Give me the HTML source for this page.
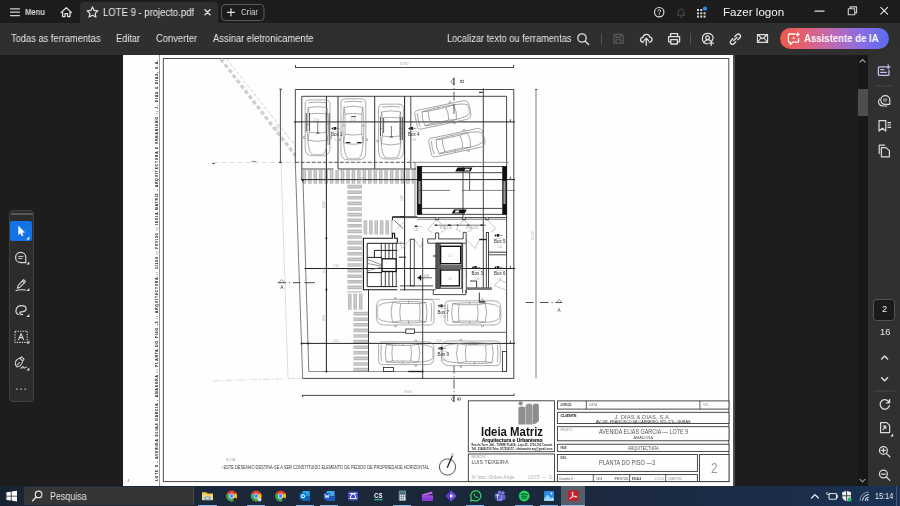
<!DOCTYPE html>
<html lang="pt"><head><meta charset="utf-8"><title>LOTE 9 - projecto.pdf</title>
<style>
*{margin:0;padding:0;box-sizing:border-box}
html,body{width:900px;height:506px;overflow:hidden;background:#1e1e1e;font-family:"Liberation Sans",sans-serif;color:#e6e6e6}
#app{position:relative;width:900px;height:506px;overflow:hidden;opacity:.999}
.abs{position:absolute}
.t{position:absolute;white-space:nowrap;line-height:1;display:inline-block;transform-origin:0 50%;will-change:transform}
#titlebar{left:0;top:0;width:900px;height:23px;background:#1d1d1d}
#tab{left:80px;top:2px;width:138px;height:22px;background:#303030;border-radius:4px 4px 0 0}
#toolbar{left:0;top:23px;width:900px;height:32px;background:#303030}
#aibtn{left:780px;top:28px;width:109px;height:21px;border-radius:10.5px;background:linear-gradient(90deg,#ee5a4a 0%,#e8606a 18%,#c46ab0 45%,#8a6ee6 75%,#5c6cf0 100%)}

#docbg{left:0;top:55px;width:868px;height:431px;background:#1e1e1e}
#page{left:123px;top:55px;width:610px;height:431px;background:#fff}
#pageshadow{left:733px;top:55px;width:1.5px;height:431px;background:#4e4e4e}
#scroll{left:857.5px;top:55px;width:10.5px;height:431px;background:#181818}
#thumb{left:858px;top:89px;width:9.5px;height:26.5px;background:#4f4f4f}
#rpanel{left:868px;top:55px;width:32px;height:431px;background:#313131}
#ltools{left:8.5px;top:210px;width:25.5px;height:192px;background:#2d2d2d;border:1px solid #414141;border-radius:4px}
#lgrip{left:10.5px;top:213px;width:22px;height:2px;background:#585858;border-radius:1px}
#lsel{left:10.4px;top:221px;width:21.6px;height:20.4px;background:#1473e6;border-radius:2px}
#taskbar{left:0;top:486px;width:900px;height:20px;background:linear-gradient(90deg,#182232 0%,#1c293b 4%,#1c293b 55%,#1c2d49 85%,#1c3356 100%)}
#tsearch{left:23.8px;top:486.6px;width:170px;height:18.2px;background:#363636;border-right:1px solid #4c4c4c}
#tactive{left:561px;top:486px;width:24px;height:20px;background:#55606c}
.ul{top:504.6px;height:1.4px;background:#86b6e8}
</style></head>
<body><div id="app">
<div id="titlebar" class="abs"></div><div id="tab" class="abs"></div><div id="toolbar" class="abs"></div>
<svg class="abs" style="left:0;top:0" width="900" height="55" viewBox="0 0 900 55" fill="none" stroke="#e0e0e0" stroke-width="1.3" stroke-linecap="round" stroke-linejoin="round">
<g stroke="#d0d0d0" stroke-width="1.2"><path d="M10.5 8.8H19.5M10.5 12.2H19.5M10.5 15.6H19.5"/></g>
<path d="M61 12.6L66.3 7.7L71.6 12.6M62.6 11.6V16.6H65V13.6H67.6V16.6H70V11.6" stroke-width="1.25"/>
<path d="M92.5 6.9L94.1 10.4L97.9 10.8L95.1 13.4L95.9 17.1L92.5 15.2L89.1 17.1L89.9 13.4L87.1 10.8L90.9 10.4Z" stroke-width="1.2"/>
<path d="M205 9.8L210 14.8M210 9.8L205 14.8" stroke-width="1.4"/>
<rect x="221.5" y="4.5" width="42.5" height="16" rx="3.5" stroke="#5a5a5a" stroke-width="1"/>
<path d="M227.5 12.3H234.5M231 8.8V15.8" stroke-width="1.2"/>
<circle cx="659.2" cy="12.2" r="4.7" stroke-width="1.2"/>
<path d="M657.9 10.9C657.9 9.3 660.6 9.3 660.6 10.9C660.6 11.9 659.3 12 659.3 13.1M659.3 14.6V14.7" stroke-width="1"/>
<path d="M677.3 15.2C678.6 14 678.2 12.2 678.6 10.6C679.2 8.4 682.8 8.4 683.4 10.6C683.8 12.2 683.4 14 684.7 15.2ZM680 16.6C680.4 17.6 681.6 17.6 682 16.6" stroke="#484848" stroke-width="1.1"/>
<g fill="#d8d8d8" stroke="none"><rect x="697" y="9" width="2" height="2"/><rect x="700.3" y="9" width="2" height="2"/>
<rect x="697" y="12.3" width="2" height="2"/><rect x="700.3" y="12.3" width="2" height="2"/><rect x="703.6" y="12.3" width="2" height="2"/>
<rect x="697" y="15.6" width="2" height="2"/><rect x="700.3" y="15.6" width="2" height="2"/><rect x="703.6" y="15.6" width="2" height="2"/>
<circle cx="705" cy="8.6" r="2.1" fill="#2f8cf0"/></g>
<path d="M815 11.2H824" stroke-width="1.2"/>
<path d="M848.3 8.7H854.7V14.7H848.3ZM850.2 8.5V6.9H856.6V12.9H855" stroke="#cfcfcf" stroke-width="1.1"/>
<path d="M880.8 7.4L887.6 14.2M887.6 7.4L880.8 14.2" stroke-width="1.2"/>
<!-- toolbar icons -->
<circle cx="582" cy="38" r="4.2" stroke-width="1.3"/><path d="M585.2 41.2L588.6 44.6" stroke-width="1.4"/>
<path d="M601.5 33.5V44M690.5 33.5V44" stroke="#555" stroke-width="1"/>
<path d="M613.8 34.2H621.4L623.4 36.2V43.2H613.8ZM616 34.4V37.4H620.6V34.4M616 43V39.8H621.2V43" stroke="#5c5c5c" stroke-width="1.1"/>
<path d="M643.6 42.2C639.6 42.2 639.6 37.6 643 37.4C643.4 33.2 649.6 33.4 649.8 37.2C652.8 37.4 652.8 42 649.2 42.2M646.3 45.2V38.6M644 40.6L646.3 38.3L648.6 40.6" stroke-width="1.3"/>
<path d="M670.6 36.4V33.6H677.6V36.4M670.6 41.8H668.6V36.6H679.6V41.8H677.6M670.8 39.6H677.4V44H670.8Z" stroke-width="1.3"/>
<path d="M711.6 41.4C715.2 36.6 711.4 33.2 707.4 33.4C700.6 33.8 700.8 43.6 707.6 43.8M704.4 42.4C704.8 39.4 710.2 39.4 710.6 41M707.5 35.8A1.9 1.9 0 1 0 707.51 35.8M711.2 41V45.4M709 43.2H713.4" stroke-width="1.2"/>
<path d="M733.8 40.6L736.8 37.6M734.8 36.6L736.4 35C739 32.6 742 35.6 739.6 38L738 39.6M735.8 41.8L734.2 43.4C731.8 45.8 728.8 42.8 731.2 40.4L732.8 38.8" stroke-width="1.4"/>
<path d="M757.4 34.6H767.6V42.4H757.4ZM757.6 34.8L762.5 38.8L767.4 34.8M757.6 42.2L761 38M767.4 42.2L764 38" stroke-width="1.1"/>
</svg>
<span id="t_menu" class="t" style="left:25px;top:7.78px;font-size:8.5px;color:#d6d6d6;font-weight:bold;transform:scaleX(0.9008);">Menu</span>
<span id="t_tab" class="t" style="left:102.9px;top:7.70px;font-size:10px;color:#f2f2f2;font-weight:normal;transform:scaleX(0.9528);">LOTE 9 - projecto.pdf</span>
<span id="t_criar" class="t" style="left:241px;top:7.65px;font-size:9px;color:#dcdcdc;font-weight:normal;transform:scaleX(0.8718);">Criar</span>
<span id="t_todas" class="t" style="left:10.5px;top:33.80px;font-size:10px;color:#e8e8e8;font-weight:normal;transform:scaleX(0.9306);">Todas as ferramentas</span>
<span id="t_edit" class="t" style="left:116px;top:33.80px;font-size:10px;color:#e8e8e8;font-weight:normal;transform:scaleX(0.9187);">Editar</span>
<span id="t_conv" class="t" style="left:156.3px;top:33.80px;font-size:10px;color:#e8e8e8;font-weight:normal;transform:scaleX(0.9384);">Converter</span>
<span id="t_ass" class="t" style="left:213.3px;top:33.80px;font-size:10px;color:#e8e8e8;font-weight:normal;transform:scaleX(0.9359);">Assinar eletronicamente</span>
<span id="t_loc" class="t" style="left:447px;top:33.80px;font-size:10px;color:#e8e8e8;font-weight:normal;transform:scaleX(0.9255);">Localizar texto ou ferramentas</span>
<span id="t_logon" class="t" style="left:722.8px;top:6.55px;font-size:11px;color:#f4f4f4;font-weight:normal;transform:scaleX(1.0535);">Fazer logon</span>
<div id="aibtn" class="abs"></div>
<svg class="abs" style="left:786px;top:31px" width="16" height="16" viewBox="0 0 16 16" fill="none" stroke="#fff" stroke-width="1.3" stroke-linejoin="round" stroke-linecap="round">
<path d="M8.6 3H3.4Q2.4 3 2.4 4V10.2Q2.4 11.2 3.4 11.2H4.2V13.6L6.8 11.2H11.6Q12.6 11.2 12.6 10.2V7.6"/>
<path d="M11.6 1L12.2 2.8L14 3.4L12.2 4L11.6 5.8L11 4L9.2 3.4L11 2.8Z" fill="#fff" stroke-width=".5"/><circle cx="7.6" cy="7.2" r=".9" fill="#fff" stroke="none"/></svg>
<span id="t_ai" class="t" style="left:804.3px;top:33.80px;font-size:10px;color:#ffffff;font-weight:bold;transform:scaleX(0.9600);">Assistente de IA</span>
<div id="docbg" class="abs"></div><div id="page" class="abs"></div><div id="pageshadow" class="abs"></div>
<div id="scroll" class="abs"></div><div id="thumb" class="abs"></div><div id="rpanel" class="abs"></div>
<div id="ltools" class="abs"></div><div id="lgrip" class="abs"></div><div id="lsel" class="abs"></div>
<svg class="abs" style="left:0;top:205px" width="40" height="200" viewBox="0 205 40 200" fill="none" stroke="#dcdcdc" stroke-width="1.15" stroke-linecap="round" stroke-linejoin="round">
<path d="M18.5 226.2V234.8L20.5 232.9L22 236L23.2 235.5L21.8 232.5L24.4 232.3Z" fill="#fff" stroke="#fff" stroke-width=".4"/>
<g fill="#e8e8e8" stroke="none"><path d="M29.3 236.6V239.6H26.3Z" fill="#fff"/><path d="M29.3 261.6V264.6H26.3Z"/><path d="M29.3 288V291H26.3Z"/><path d="M29.3 314V317H26.3Z"/><path d="M29.3 340.6V343.6H26.3Z"/><path d="M29.3 367.6V370.6H26.3Z"/></g>
<path d="M20.6 252.4C17.6 252.4 15.6 254.6 15.6 257.4C15.6 260.4 18 262.6 21 262.6H25.8V257.4C25.8 254.6 23.6 252.4 20.6 252.4Z"/><path d="M18.6 256.4H23M18.6 258.4H22" stroke-width=".9"/>
<path d="M17.4 288.2L18.2 285.4L23.6 279.6L25.6 281.6L20 287.2ZM22.4 280.8L24.4 282.8M16 290.6C18.6 289.6 20.6 289.4 25.6 290" stroke-width="1.05"/>
<path d="M18.4 314.6C14.2 312.6 15.6 305.6 21.6 305.6C27.2 305.6 27.6 310.6 23 311.6C20.6 312.2 19.4 311.6 19.8 313.2C20 314.4 21.4 314.8 22.6 314.4"/>
<path d="M15 331.2H27.2V342.4H15Z" stroke-dasharray="1.3 1.2" stroke-linecap="butt" stroke-width="1.1"/><path d="M18.6 339.6L21.1 333.6L23.6 339.6M19.6 337.6H22.6" stroke-width="1.1"/>
<path d="M15.4 364.6C14.6 361.8 16.6 359 19.8 358.2L22.6 360.8C22.2 364.2 19.8 366.6 17 367ZM20 358L21.6 356.8L24 359.2L22.8 360.8M17.2 365L19.6 362.6M21 368.4C22.6 366.4 23.6 366.4 23.6 367.6C23.6 368.8 25.4 367.6 26.4 367" stroke-width="1.05"/>
<g fill="#9a9a9a" stroke="none"><circle cx="16.8" cy="389.2" r=".9"/><circle cx="21" cy="389.2" r=".9"/><circle cx="25.2" cy="389.2" r=".9"/></g>
</svg>
<svg class="abs" style="left:855px;top:55px" width="45" height="431" viewBox="855 55 45 431" fill="none" stroke="#dcdcdc" stroke-width="1.2" stroke-linecap="round" stroke-linejoin="round">
<path d="M860 62L862.5 59.5L865 62" stroke="#9a9a9a" stroke-width="1.2"/><path d="M860 479.4L862.5 481.9L865 479.4" stroke="#9a9a9a" stroke-width="1.2"/>
<g stroke="#c4c2f4"><path d="M885.4 66.8H879.4Q878.4 66.8 878.4 67.8V74.4Q878.4 75.4 879.4 75.4H888Q889 75.4 889 74.4V70.6" stroke-width="1.3"/><path d="M880.6 69.6H884M880.6 72.4H886.4" stroke-width="1.1"/><path d="M888.2 64.6L888.8 66.4L890.6 67L888.8 67.6L888.2 69.4L887.6 67.6L885.8 67L887.6 66.4Z" fill="#c4c2f4" stroke-width=".5"/></g>
<path d="M876 86H892" stroke="#4a4a4a" stroke-width="1"/>
<path d="M885.4 95.6C882.6 95.6 880.8 97.6 880.8 100C880.8 102.6 882.8 104.4 885.4 104.4H889.8V100C889.8 97.6 888 95.6 885.4 95.6ZM879.6 99C877.4 101.6 878.6 105.4 882.4 106H886.8" stroke-width="1.15"/><path d="M883.6 99.2H887M883.6 101H886.4" stroke-width=".8"/>
<path d="M879 120.6H885.8V131L882.4 128.2L879 131ZM888 122.6H890.6M888 125H890.6M888 127.4H890.6" stroke-width="1.2"/>
<path d="M881.4 147.6H886L889.4 150.6V156.8H881.4ZM879.2 153.6V145.2H884.6" stroke-width="1.2"/>
<rect x="873.5" y="299.5" width="21" height="21" rx="3" fill="#1b1b1b" stroke="#555" stroke-width="1"/>
<path d="M881.6 359L884.6 356L887.6 359M881.6 377.8L884.6 380.8L887.6 377.8" stroke-width="1.5"/>
<path d="M874 391H895" stroke="#4a4a4a" stroke-width="1"/>
<path d="M889.2 402.6A4.7 4.7 0 1 0 889.4 405.6M889.6 399.6V402.8H886.4" stroke-width="1.3"/>
<path d="M880.6 422.6H886.8L889.6 425.4V432.6H880.6ZM883 429.6L885.6 426.4M885.8 428.6V426.2H883.4" stroke-width="1.2"/><path d="M893.2 433.6V436.6H890.2Z" fill="#e8e8e8" stroke="none"/>
<circle cx="883.4" cy="450.4" r="3.9" stroke-width="1.25"/><path d="M886.4 453.4L889.8 456.8M881.6 450.4H885.2M883.4 448.6V452.2" stroke-width="1.25"/>
<circle cx="883.4" cy="474" r="3.9" stroke-width="1.25"/><path d="M886.4 477L889.8 480.4M881.6 474H885.2" stroke-width="1.25"/>
</svg>
<span id="t_pg" class="t" style="left:881.6px;top:304.78px;font-size:9.2px;color:#f0f0f0;font-weight:normal;transform:scaleX(0.9756);">2</span>
<span id="t_pgs" class="t" style="left:879.8px;top:327.58px;font-size:9.2px;color:#e6e6e6;font-weight:normal;transform:scaleX(1.0162);">16</span>
<svg class="abs" style="left:0;top:0" width="900" height="506" viewBox="0 0 900 506" fill="none" font-family="'Liberation Sans',sans-serif">
<g>
<path d="M159.5 55.0L159.5 486.0" stroke="#808080" stroke-width="0.79" />
<rect x="163.3" y="58.5" width="565.5" height="423.1" stroke="#484848" stroke-width="0.97" fill="none" />
<text transform="translate(157.6 481) rotate(-90)" font-size="3.1" font-weight="bold" fill="#1c1c1c" stroke="#1c1c1c" stroke-width=".08" textLength="421" lengthAdjust="spacing">LOTE 9 - AVENIDA ELIAS GARCIA - AMADORA :: PLANTA DO PISO -3 :: ARQUITECTURA :: 1/100 :: FEV/20 :: IDEIA MATRIZ - ARQUITECTURA E URBANISMO :: J. DIAS &amp; DIAS, S.A.</text>
<text x="127.5" y="481.6" font-size="3" fill="#777" text-anchor="start" font-weight="normal" font-style="italic">4</text>
<path d="M220.8 59.0L295.5 155.7" stroke="#d0d0d0" stroke-width="3.34" stroke-dasharray="4.2 2.4"/>
<path d="M226.6 59.0L296.0 146.5" stroke="#bdbdbd" stroke-width="0.70" stroke-dasharray="3.5 2"/>
<path d="M213.0 162.6L295.0 162.6" stroke="#d2d2d2" stroke-width="0.70" stroke-dasharray="6 2"/>
<path d="M212.0 163.6L215.0 163.6" stroke="#444" stroke-width="0.88" />
<path d="M251.5 161.4L256.5 161.4" stroke="#999" stroke-width="1.06" />
<path d="M281.0 163.0L288.0 378.4" stroke="#d2d2d2" stroke-width="0.70" />
<path d="M213.0 381.0L302.0 378.2" stroke="#cfcfcf" stroke-width="0.70" stroke-dasharray="7 2 1.5 2"/>
<path d="M295.3 67.5L513.8 67.5" stroke="#333" stroke-width="0.88" />
<path d="M295.5 65.0L295.5 68.0" stroke="#333" stroke-width="0.88" />
<path d="M513.6 65.0L513.6 68.0" stroke="#333" stroke-width="0.88" />
<text x="404.0" y="64.6" font-size="3.6" fill="#aaa" text-anchor="middle" font-weight="normal" >19.80</text>
<path d="M536.0 89.3L536.0 378.4" stroke="#7c7c7c" stroke-width="0.97" />
<path d="M535.0 89.6L537.4 89.6" stroke="#444" stroke-width="0.88" />
<text x="0.0" y="0.0" font-size="3.6" fill="#b0b0b0" text-anchor="middle" font-weight="normal" transform="translate(534 236) rotate(-90)">29.00</text>
<path d="M280.4 88.9L280.4 162.4" stroke="#3c3c3c" stroke-width="0.88" />
<path d="M279.4 89.2L282.0 89.2" stroke="#333" stroke-width="0.88" />
<path d="M279.0 162.4L281.8 162.4" stroke="#333" stroke-width="1.06" />
<text x="0.0" y="0.0" font-size="3.6" fill="#b8b8b8" text-anchor="middle" font-weight="normal" transform="translate(278.6 128) rotate(-90)">7.40</text>
<path d="M302.2 395.4L514.2 395.4" stroke="#2c2c2c" stroke-width="0.88" />
<path d="M302.5 395.0L302.5 397.0" stroke="#333" stroke-width="0.88" />
<path d="M514.0 393.6L514.0 395.6" stroke="#333" stroke-width="0.88" />
<text x="408.0" y="393.0" font-size="3.6" fill="#aaa" text-anchor="middle" font-weight="normal" >19.80</text>
<path d="M302.6 170.0h3.6v13.8h-3.6zM308.1 170.0h3.6v13.8h-3.6zM313.5 170.0h3.6v13.8h-3.6zM318.9 170.0h3.6v13.8h-3.6zM324.4 170.0h3.6v13.8h-3.6zM329.8 170.0h3.6v13.8h-3.6zM335.3 170.0h3.6v13.8h-3.6zM340.7 170.0h3.6v13.8h-3.6zM346.2 170.0h3.6v13.8h-3.6zM351.6 170.0h3.6v13.8h-3.6zM357.1 170.0h3.6v13.8h-3.6zM362.5 170.0h3.6v13.8h-3.6zM368.0 170.0h3.6v13.8h-3.6zM373.4 170.0h3.6v13.8h-3.6zM378.9 170.0h3.6v13.8h-3.6zM384.3 170.0h3.6v13.8h-3.6zM389.8 170.0h3.6v13.8h-3.6zM395.2 170.0h3.6v13.8h-3.6zM400.7 170.0h3.6v13.8h-3.6zM406.1 170.0h3.6v13.8h-3.6zM411.6 170.0h2.4v13.8h-2.4z" fill="#bcbcbc" stroke="none"/><path d="M304.0 170.0h.8v13.8h-.8zM309.5 170.0h.8v13.8h-.8zM314.9 170.0h.8v13.8h-.8zM320.4 170.0h.8v13.8h-.8zM325.8 170.0h.8v13.8h-.8zM331.2 170.0h.8v13.8h-.8zM336.7 170.0h.8v13.8h-.8zM342.1 170.0h.8v13.8h-.8zM347.6 170.0h.8v13.8h-.8zM353.0 170.0h.8v13.8h-.8zM358.5 170.0h.8v13.8h-.8zM363.9 170.0h.8v13.8h-.8zM369.4 170.0h.8v13.8h-.8zM374.8 170.0h.8v13.8h-.8zM380.3 170.0h.8v13.8h-.8zM385.7 170.0h.8v13.8h-.8zM391.2 170.0h.8v13.8h-.8zM396.6 170.0h.8v13.8h-.8zM402.1 170.0h.8v13.8h-.8zM407.5 170.0h.8v13.8h-.8zM412.4 170.0h.8v13.8h-.8z" fill="#d6d6d6" stroke="none"/>
<path d="M347.4 184.8h14.6v3.6h-14.6zM347.4 190.4h14.6v3.6h-14.6zM347.4 196.0h14.6v3.6h-14.6zM347.4 201.6h14.6v3.6h-14.6zM347.4 207.2h14.6v3.6h-14.6zM347.4 212.8h14.6v3.6h-14.6zM347.4 218.4h14.6v3.6h-14.6zM347.4 224.0h14.6v3.6h-14.6zM347.4 229.6h14.6v3.6h-14.6zM347.4 235.2h14.6v3.6h-14.6zM347.4 240.8h14.6v3.6h-14.6zM347.4 246.4h14.6v3.6h-14.6zM347.4 252.0h14.6v3.6h-14.6zM347.4 257.6h14.6v3.6h-14.6zM347.4 263.2h14.6v3.6h-14.6zM347.4 268.8h14.6v3.6h-14.6zM347.4 274.4h14.6v3.6h-14.6zM347.4 280.0h14.6v3.6h-14.6zM347.4 285.6h14.6v3.6h-14.6zM347.4 291.2h14.6v1.3h-14.6z" fill="#bcbcbc" stroke="none"/><path d="M347.4 186.2h14.6v.8h-14.6zM347.4 191.8h14.6v.8h-14.6zM347.4 197.4h14.6v.8h-14.6zM347.4 203.0h14.6v.8h-14.6zM347.4 208.6h14.6v.8h-14.6zM347.4 214.2h14.6v.8h-14.6zM347.4 219.8h14.6v.8h-14.6zM347.4 225.4h14.6v.8h-14.6zM347.4 231.0h14.6v.8h-14.6zM347.4 236.6h14.6v.8h-14.6zM347.4 242.2h14.6v.8h-14.6zM347.4 247.8h14.6v.8h-14.6zM347.4 253.4h14.6v.8h-14.6zM347.4 259.0h14.6v.8h-14.6zM347.4 264.6h14.6v.8h-14.6zM347.4 270.2h14.6v.8h-14.6zM347.4 275.8h14.6v.8h-14.6zM347.4 281.4h14.6v.8h-14.6zM347.4 287.0h14.6v.8h-14.6zM347.4 291.5h14.6v.8h-14.6z" fill="#d6d6d6" stroke="none"/>
<path d="M363.6 220.2h3.6v14.3h-3.6zM369.1 220.2h3.6v14.3h-3.6zM374.5 220.2h3.6v14.3h-3.6zM379.9 220.2h3.6v14.3h-3.6zM385.4 220.2h3.6v14.3h-3.6zM390.8 220.2h1.6v14.3h-1.6z" fill="#bcbcbc" stroke="none"/><path d="M365.0 220.2h.8v14.3h-.8zM370.5 220.2h.8v14.3h-.8zM375.9 220.2h.8v14.3h-.8zM381.4 220.2h.8v14.3h-.8zM386.8 220.2h.8v14.3h-.8zM391.2 220.2h.8v14.3h-.8z" fill="#d6d6d6" stroke="none"/>
<path d="M348.0 293.8h3.6v16.0h-3.6zM353.4 293.8h3.6v16.0h-3.6zM358.9 293.8h3.6v16.0h-3.6z" fill="#bcbcbc" stroke="none"/><path d="M349.4 293.8h.8v16.0h-.8zM354.9 293.8h.8v16.0h-.8zM360.3 293.8h.8v16.0h-.8z" fill="#d6d6d6" stroke="none"/>
<path d="M353.4 311.8h14.8v3.6h-14.8zM353.4 317.4h14.8v3.6h-14.8zM353.4 323.0h14.8v3.6h-14.8zM353.4 328.6h14.8v3.6h-14.8zM353.4 334.2h14.8v3.6h-14.8zM353.4 339.8h14.8v3.6h-14.8zM353.4 345.4h14.8v3.6h-14.8zM353.4 351.0h14.8v3.6h-14.8zM353.4 356.6h14.8v3.6h-14.8zM353.4 362.2h14.8v3.6h-14.8zM353.4 367.8h14.8v3.6h-14.8z" fill="#bcbcbc" stroke="none"/><path d="M353.4 313.2h14.8v.8h-14.8zM353.4 318.8h14.8v.8h-14.8zM353.4 324.4h14.8v.8h-14.8zM353.4 330.0h14.8v.8h-14.8zM353.4 335.6h14.8v.8h-14.8zM353.4 341.2h14.8v.8h-14.8zM353.4 346.8h14.8v.8h-14.8zM353.4 352.4h14.8v.8h-14.8zM353.4 358.0h14.8v.8h-14.8zM353.4 363.6h14.8v.8h-14.8zM353.4 369.2h14.8v.8h-14.8z" fill="#d6d6d6" stroke="none"/>
<path d="M302.7 378.4L513.8 378.4L513.8 89.5L295.3 89.5L295.3 162.3" stroke="#303030" stroke-width="0.88" />
<path d="M295.3 162.3L302.7 378.4" stroke="#555" stroke-width="0.75" />
<path d="M301.8 179.6L301.8 96.3L506.6 96.3L506.6 371.5" stroke="#303030" stroke-width="0.88" />
<path d="M303.0 179.6L308.8 371.5" stroke="#505050" stroke-width="0.75" />
<path d="M301.4 179.8h2.4l-1.2 2.4z" fill="#222"/>
<path d="M308.6 371.5L506.6 371.5" stroke="#777" stroke-width="0.79" />
<path d="M294.0 121.9L515.0 121.9" stroke="#1c1c1c" stroke-width="0.97" />
<path d="M301.0 179.6L515.0 179.6" stroke="#1c1c1c" stroke-width="0.97" />
<path d="M304.5 268.5L515.3 268.5" stroke="#1c1c1c" stroke-width="0.97" />
<path d="M301.0 343.4L515.0 343.4" stroke="#1c1c1c" stroke-width="0.97" />
<path d="M326.4 96.3L326.4 371.5" stroke="#1c1c1c" stroke-width="0.97" />
<path d="M404.6 96.3L404.6 290.4" stroke="#1c1c1c" stroke-width="0.97" />
<path d="M483.3 88.4L483.3 290.0" stroke="#2c2c2c" stroke-width="0.88" />
<path d="M422.7 238.0L422.7 379.0" stroke="#2c2c2c" stroke-width="0.88" />
<circle cx="326.4" cy="238.3" r="1" fill="#222"/>
<circle cx="326.4" cy="289.4" r="1" fill="#222"/>
<circle cx="326.4" cy="371.5" r="1" fill="#222"/>
<circle cx="422.7" cy="371.5" r="1" fill="#222"/>
<circle cx="301.6" cy="343.4" r="1" fill="#222"/>
<circle cx="308" cy="343.4" r="1" fill="#222"/>
<path d="M510.4 119.2L510.4 121.8" stroke="#333" stroke-width="0.79" />
<path d="M510.4 176.6L510.4 179.2" stroke="#333" stroke-width="0.79" />
<path d="M510.4 265.6L510.4 268.2" stroke="#333" stroke-width="0.79" />
<path d="M510.4 340.6L510.4 343.2" stroke="#333" stroke-width="0.79" />
<path d="M479.0 92.4L482.6 92.4" stroke="#222" stroke-width="1.14" />
<path d="M338.0 96.3L338.0 168.8" stroke="#303030" stroke-width="0.97" />
<path d="M374.7 96.3L374.7 168.8" stroke="#303030" stroke-width="0.97" />
<path d="M410.8 96.3L410.8 168.0" stroke="#303030" stroke-width="0.88" />
<path d="M295.0 162.3L414.0 162.3" stroke="#404040" stroke-width="0.88" stroke-dasharray="4 1.6"/>
<path d="M414.0 162.3L509.0 162.3" stroke="#7a7a7a" stroke-width="0.79" />
<path d="M302.0 169.0L333.6 169.0" stroke="#333" stroke-width="0.88" />
<path d="M338.0 169.0L416.0 169.0" stroke="#333" stroke-width="0.97" />
<path d="M415.0 162.3L415.0 216.5" stroke="#555" stroke-width="0.70" />
<g transform="translate(317.6 127.8) rotate(90)" stroke="#7c7c7c" stroke-width="0.62" fill="none"><path d="M-23.4 -12.4H20.4Q27.9 -12.4 27.9 -5.0V5.0Q27.9 12.4 20.4 12.4H-23.4Q-27.9 12.4 -27.9 7.9V-7.9Q-27.9 -12.4 -23.4 -12.4Z"/><path d="M26.2 -6.4Q27.5 0 26.2 6.4" stroke-width="0.496"/><path d="M12.3 -9.7Q15.0 0 12.3 9.7L4.5 8.4Q6.1 0 4.5 -8.4Z"/><path d="M-13.9 -8.4Q-15.0 0 -13.9 8.4L-20.1 9.4Q-22.3 0 -20.1 -9.4Z"/><path d="M4.5 -8.4H-13.9M4.5 8.4H-13.9M12.3 -9.7Q0 -11.4 -20.1 -9.4M12.3 9.7Q0 11.4 -20.1 9.4"/><path d="M12.3 -9.7Q22.3 -9.2 25.9 -6.2M12.3 9.7Q22.3 9.2 25.9 6.2M-25.1 -8.9Q-26.2 0 -25.1 8.9"/><path d="M8.4 -12.4l.6 -1.8l1.6 .3l-.2 1.5M8.4 12.4l.6 1.8l1.6 -.3l-.2 -1.5"/><path d="M-3.3 -8.4V-11.2M-3.3 8.4V11.2"/></g>
<g transform="translate(353.4 129.3) rotate(90)" stroke="#7c7c7c" stroke-width="0.62" fill="none"><path d="M-26.0 -12.4H23.1Q30.5 -12.4 30.5 -5.0V5.0Q30.5 12.4 23.1 12.4H-26.0Q-30.5 12.4 -30.5 7.9V-7.9Q-30.5 -12.4 -26.0 -12.4Z"/><path d="M28.9 -6.4Q30.1 0 28.9 6.4" stroke-width="0.496"/><path d="M13.4 -9.7Q16.5 0 13.4 9.7L4.9 8.4Q6.7 0 4.9 -8.4Z"/><path d="M-15.2 -8.4Q-16.5 0 -15.2 8.4L-22.0 9.4Q-24.4 0 -22.0 -9.4Z"/><path d="M4.9 -8.4H-15.2M4.9 8.4H-15.2M13.4 -9.7Q0 -11.4 -22.0 -9.4M13.4 9.7Q0 11.4 -22.0 9.4"/><path d="M13.4 -9.7Q24.4 -9.2 28.4 -6.2M13.4 9.7Q24.4 9.2 28.4 6.2M-27.4 -8.9Q-28.7 0 -27.4 8.9"/><path d="M9.2 -12.4l.6 -1.8l1.6 .3l-.2 1.5M9.2 12.4l.6 1.8l1.6 -.3l-.2 -1.5"/><path d="M-3.7 -8.4V-11.2M-3.7 8.4V11.2"/></g>
<g transform="translate(391.0 131.6) rotate(90)" stroke="#7c7c7c" stroke-width="0.62" fill="none"><path d="M-22.9 -12.4H19.9Q27.4 -12.4 27.4 -5.0V5.0Q27.4 12.4 19.9 12.4H-22.9Q-27.4 12.4 -27.4 8.0V-8.0Q-27.4 -12.4 -22.9 -12.4Z"/><path d="M25.8 -6.5Q27.0 0 25.8 6.5" stroke-width="0.496"/><path d="M12.0 -9.7Q14.8 0 12.0 9.7L4.4 8.5Q6.0 0 4.4 -8.5Z"/><path d="M-13.7 -8.5Q-14.8 0 -13.7 8.5L-19.7 9.5Q-21.9 0 -19.7 -9.5Z"/><path d="M4.4 -8.5H-13.7M4.4 8.5H-13.7M12.0 -9.7Q0 -11.5 -19.7 -9.5M12.0 9.7Q0 11.5 -19.7 9.5"/><path d="M12.0 -9.7Q21.9 -9.2 25.4 -6.2M12.0 9.7Q21.9 9.2 25.4 6.2M-24.6 -9.0Q-25.7 0 -24.6 9.0"/><path d="M8.2 -12.4l.6 -1.8l1.6 .3l-.2 1.5M8.2 12.4l.6 1.8l1.6 -.3l-.2 -1.5"/><path d="M-3.3 -8.5V-11.2M-3.3 8.5V11.2"/></g>
<g transform="translate(443.0 114.7) rotate(-12)" stroke="#7c7c7c" stroke-width="0.62" fill="none"><path d="M-24.1 -9.5H21.8Q27.5 -9.5 27.5 -3.8V3.8Q27.5 9.5 21.8 9.5H-24.1Q-27.5 9.5 -27.5 6.1V-6.1Q-27.5 -9.5 -24.1 -9.5Z"/><path d="M25.9 -4.9Q27.1 0 25.9 4.9" stroke-width="0.496"/><path d="M12.1 -7.4Q14.9 0 12.1 7.4L4.4 6.5Q6.0 0 4.4 -6.5Z"/><path d="M-13.8 -6.5Q-14.9 0 -13.8 6.5L-19.8 7.2Q-22.0 0 -19.8 -7.2Z"/><path d="M4.4 -6.5H-13.8M4.4 6.5H-13.8M12.1 -7.4Q0 -8.7 -19.8 -7.2M12.1 7.4Q0 8.7 -19.8 7.2"/><path d="M12.1 -7.4Q22.0 -7.0 25.6 -4.8M12.1 7.4Q22.0 7.0 25.6 4.8M-24.8 -6.8Q-25.8 0 -24.8 6.8"/><path d="M8.2 -9.5l.6 -1.8l1.6 .3l-.2 1.5M8.2 9.5l.6 1.8l1.6 -.3l-.2 -1.5"/><path d="M-3.3 -6.5V-8.6M-3.3 6.5V8.6"/></g>
<g transform="translate(457.0 142.5) rotate(-12)" stroke="#7c7c7c" stroke-width="0.62" fill="none"><path d="M-24.1 -9.5H21.8Q27.5 -9.5 27.5 -3.8V3.8Q27.5 9.5 21.8 9.5H-24.1Q-27.5 9.5 -27.5 6.1V-6.1Q-27.5 -9.5 -24.1 -9.5Z"/><path d="M25.9 -4.9Q27.1 0 25.9 4.9" stroke-width="0.496"/><path d="M12.1 -7.4Q14.9 0 12.1 7.4L4.4 6.5Q6.0 0 4.4 -6.5Z"/><path d="M-13.8 -6.5Q-14.9 0 -13.8 6.5L-19.8 7.2Q-22.0 0 -19.8 -7.2Z"/><path d="M4.4 -6.5H-13.8M4.4 6.5H-13.8M12.1 -7.4Q0 -8.7 -19.8 -7.2M12.1 7.4Q0 8.7 -19.8 7.2"/><path d="M12.1 -7.4Q22.0 -7.0 25.6 -4.8M12.1 7.4Q22.0 7.0 25.6 4.8M-24.8 -6.8Q-25.8 0 -24.8 6.8"/><path d="M8.2 -9.5l.6 -1.8l1.6 .3l-.2 1.5M8.2 9.5l.6 1.8l1.6 -.3l-.2 -1.5"/><path d="M-3.3 -6.5V-8.6M-3.3 6.5V8.6"/></g>
<g transform="translate(405.2 312.2) rotate(180)" stroke="#7c7c7c" stroke-width="0.62" fill="none"><path d="M-24.1 -12.8H21.1Q28.8 -12.8 28.8 -5.1V5.1Q28.8 12.8 21.1 12.8H-24.1Q-28.8 12.8 -28.8 8.2V-8.2Q-28.8 -12.8 -24.1 -12.8Z"/><path d="M27.1 -6.7Q28.4 0 27.1 6.7" stroke-width="0.496"/><path d="M12.7 -10.0Q15.5 0 12.7 10.0L4.6 8.7Q6.3 0 4.6 -8.7Z"/><path d="M-14.4 -8.7Q-15.5 0 -14.4 8.7L-20.7 9.7Q-23.0 0 -20.7 -9.7Z"/><path d="M4.6 -8.7H-14.4M4.6 8.7H-14.4M12.7 -10.0Q0 -11.8 -20.7 -9.7M12.7 10.0Q0 11.8 -20.7 9.7"/><path d="M12.7 -10.0Q23.0 -9.5 26.7 -6.4M12.7 10.0Q23.0 9.5 26.7 6.4M-25.9 -9.2Q-27.0 0 -25.9 9.2"/><path d="M8.6 -12.8l.6 -1.8l1.6 .3l-.2 1.5M8.6 12.8l.6 1.8l1.6 -.3l-.2 -1.5"/><path d="M-3.4 -8.7V-11.5M-3.4 8.7V11.5"/></g>
<g transform="translate(406.3 353.2) rotate(0)" stroke="#7c7c7c" stroke-width="0.62" fill="none"><path d="M-23.6 -11.4H20.9Q27.7 -11.4 27.7 -4.6V4.6Q27.7 11.4 20.9 11.4H-23.6Q-27.7 11.4 -27.7 7.3V-7.3Q-27.7 -11.4 -23.6 -11.4Z"/><path d="M26.1 -5.9Q27.3 0 26.1 5.9" stroke-width="0.496"/><path d="M12.2 -8.9Q15.0 0 12.2 8.9L4.4 7.8Q6.1 0 4.4 -7.8Z"/><path d="M-13.8 -7.8Q-15.0 0 -13.8 7.8L-19.9 8.7Q-22.2 0 -19.9 -8.7Z"/><path d="M4.4 -7.8H-13.8M4.4 7.8H-13.8M12.2 -8.9Q0 -10.5 -19.9 -8.7M12.2 8.9Q0 10.5 -19.9 8.7"/><path d="M12.2 -8.9Q22.2 -8.4 25.8 -5.7M12.2 8.9Q22.2 8.4 25.8 5.7M-24.9 -8.2Q-26.0 0 -24.9 8.2"/><path d="M8.3 -11.4l.6 -1.8l1.6 .3l-.2 1.5M8.3 11.4l.6 1.8l1.6 -.3l-.2 -1.5"/><path d="M-3.3 -7.8V-10.3M-3.3 7.8V10.3"/></g>
<g transform="translate(472.9 312.9) rotate(0)" stroke="#7c7c7c" stroke-width="0.62" fill="none"><path d="M-23.5 -12.1H20.6Q27.9 -12.1 27.9 -4.8V4.8Q27.9 12.1 20.6 12.1H-23.5Q-27.9 12.1 -27.9 7.7V-7.7Q-27.9 -12.1 -23.5 -12.1Z"/><path d="M26.3 -6.3Q27.5 0 26.3 6.3" stroke-width="0.496"/><path d="M12.3 -9.4Q15.1 0 12.3 9.4L4.5 8.2Q6.1 0 4.5 -8.2Z"/><path d="M-13.9 -8.2Q-15.1 0 -13.9 8.2L-20.1 9.2Q-22.3 0 -20.1 -9.2Z"/><path d="M4.5 -8.2H-13.9M4.5 8.2H-13.9M12.3 -9.4Q0 -11.1 -20.1 -9.2M12.3 9.4Q0 11.1 -20.1 9.2"/><path d="M12.3 -9.4Q22.3 -9.0 25.9 -6.0M12.3 9.4Q22.3 9.0 25.9 6.0M-25.1 -8.7Q-26.2 0 -25.1 8.7"/><path d="M8.4 -12.1l.6 -1.8l1.6 .3l-.2 1.5M8.4 12.1l.6 1.8l1.6 -.3l-.2 -1.5"/><path d="M-3.3 -8.2V-10.9M-3.3 8.2V10.9"/></g>
<g transform="translate(470.9 353.3) rotate(180)" stroke="#7c7c7c" stroke-width="0.62" fill="none"><path d="M-25.0 -12.3H22.0Q29.4 -12.3 29.4 -4.9V4.9Q29.4 12.3 22.0 12.3H-25.0Q-29.4 12.3 -29.4 7.9V-7.9Q-29.4 -12.3 -25.0 -12.3Z"/><path d="M27.8 -6.4Q29.0 0 27.8 6.4" stroke-width="0.496"/><path d="M12.9 -9.6Q15.9 0 12.9 9.6L4.7 8.4Q6.5 0 4.7 -8.4Z"/><path d="M-14.7 -8.4Q-15.9 0 -14.7 8.4L-21.2 9.4Q-23.5 0 -21.2 -9.4Z"/><path d="M4.7 -8.4H-14.7M4.7 8.4H-14.7M12.9 -9.6Q0 -11.4 -21.2 -9.4M12.9 9.6Q0 11.4 -21.2 9.4"/><path d="M12.9 -9.6Q23.5 -9.1 27.3 -6.2M12.9 9.6Q23.5 9.1 27.3 6.2M-26.5 -8.9Q-27.6 0 -26.5 8.9"/><path d="M8.8 -12.3l.6 -1.8l1.6 .3l-.2 1.5M8.8 12.3l.6 1.8l1.6 -.3l-.2 -1.5"/><path d="M-3.5 -8.4V-11.1M-3.5 8.4V11.1"/></g>
<path d="M306.3 113.0L306.3 131.5" stroke="#3a3a3a" stroke-width="0.79" />
<path d="M309.5 113.0L309.5 131.0" stroke="#3a3a3a" stroke-width="0.79" />
<path d="M329.2 113.0L329.2 145.0" stroke="#3a3a3a" stroke-width="0.79" />
<path d="M380.5 117.0L380.5 136.0" stroke="#3a3a3a" stroke-width="0.79" />
<path d="M383.6 118.0L383.6 133.0" stroke="#3a3a3a" stroke-width="0.79" />
<path d="M400.6 117.0L400.6 140.0" stroke="#3a3a3a" stroke-width="0.79" />
<path d="M402.6 117.0L402.6 140.0" stroke="#3a3a3a" stroke-width="0.79" />
<path d="M317.8 122.0L317.8 133.0" stroke="#444" stroke-width="0.70" />
<path d="M316.2 133.0L319.4 133.0" stroke="#333" stroke-width="0.88" />
<path d="M391.4 126.0L391.4 137.0" stroke="#444" stroke-width="0.70" />
<path d="M389.8 137.0L393.0 137.0" stroke="#333" stroke-width="0.88" />
<path d="M351.0 116.6L356.0 116.6" stroke="#333" stroke-width="0.88" />
<path d="M346.0 142.6L350.4 142.6" stroke="#222" stroke-width="1.14" />
<path d="M357.0 142.6L361.4 142.6" stroke="#222" stroke-width="1.14" />
<path d="M331.2 128.4l2 -1.3v2.6zM333.8 127.1h2.4v2.6h-2.4z" fill="#222"/><path d="M336.2 128.4h3.4" stroke="#555" stroke-width=".6"/><text x="331.0" y="136.0" font-size="4.8" fill="#2a2a2a" text-anchor="start" font-weight="normal" textLength="11.6" lengthAdjust="spacingAndGlyphs" >Box 1</text><text x="333.0" y="131.6" font-size="2.2" fill="#aaa" text-anchor="start" font-weight="normal" >12.50m²</text><text x="334.0" y="140.6" font-size="2.6" fill="#b4b4b4" text-anchor="start" font-weight="normal" >2.40</text>
<path d="M408.2 128.4l2 -1.3v2.6zM410.8 127.1h2.4v2.6h-2.4z" fill="#222"/><path d="M413.2 128.4h3.4" stroke="#555" stroke-width=".6"/><text x="408.0" y="136.0" font-size="4.8" fill="#2a2a2a" text-anchor="start" font-weight="normal" textLength="11.6" lengthAdjust="spacingAndGlyphs" >Box 4</text><text x="410.0" y="131.6" font-size="2.2" fill="#aaa" text-anchor="start" font-weight="normal" >12.50m²</text><text x="411.0" y="140.6" font-size="2.6" fill="#b4b4b4" text-anchor="start" font-weight="normal" >2.40</text>
<path d="M437.7 305.9l2 -1.3v2.6zM440.3 304.6h2.4v2.6h-2.4z" fill="#222"/><path d="M442.7 305.9h3.4" stroke="#555" stroke-width=".6"/><text x="437.5" y="313.5" font-size="4.8" fill="#2a2a2a" text-anchor="start" font-weight="normal" textLength="11.6" lengthAdjust="spacingAndGlyphs" >Box 7</text><text x="439.5" y="309.1" font-size="2.2" fill="#aaa" text-anchor="start" font-weight="normal" >12.50m²</text><text x="440.5" y="318.1" font-size="2.6" fill="#b4b4b4" text-anchor="start" font-weight="normal" >2.40</text>
<path d="M437.7 348.4l2 -1.3v2.6zM440.3 347.1h2.4v2.6h-2.4z" fill="#222"/><path d="M442.7 348.4h3.4" stroke="#555" stroke-width=".6"/><text x="437.5" y="356.0" font-size="4.8" fill="#2a2a2a" text-anchor="start" font-weight="normal" textLength="11.6" lengthAdjust="spacingAndGlyphs" >Box 9</text><text x="439.5" y="351.6" font-size="2.2" fill="#aaa" text-anchor="start" font-weight="normal" >12.50m²</text><text x="440.5" y="360.6" font-size="2.6" fill="#b4b4b4" text-anchor="start" font-weight="normal" >2.40</text>
<path d="M494.2 235.4l2 -1.3v2.6zM496.8 234.1h2.4v2.6h-2.4z" fill="#222"/><path d="M499.2 235.4h3.4" stroke="#555" stroke-width=".6"/><text x="494.0" y="243.0" font-size="4.8" fill="#2a2a2a" text-anchor="start" font-weight="normal" textLength="11.6" lengthAdjust="spacingAndGlyphs" >Box 5</text><text x="496.0" y="238.6" font-size="2.2" fill="#aaa" text-anchor="start" font-weight="normal" >12.50m²</text><text x="497.0" y="247.6" font-size="2.6" fill="#b4b4b4" text-anchor="start" font-weight="normal" >2.40</text>
<path d="M494.2 267.4l2 -1.3v2.6zM496.8 266.1h2.4v2.6h-2.4z" fill="#222"/><path d="M499.2 267.4h3.4" stroke="#555" stroke-width=".6"/><text x="494.0" y="275.0" font-size="4.8" fill="#2a2a2a" text-anchor="start" font-weight="normal" textLength="11.6" lengthAdjust="spacingAndGlyphs" >Box 6</text><text x="496.0" y="270.6" font-size="2.2" fill="#aaa" text-anchor="start" font-weight="normal" >12.50m²</text><text x="497.0" y="279.6" font-size="2.6" fill="#b4b4b4" text-anchor="start" font-weight="normal" >2.40</text>
<path d="M471.7 267.4l2 -1.3v2.6zM474.3 266.1h2.4v2.6h-2.4z" fill="#222"/><path d="M476.7 267.4h3.4" stroke="#555" stroke-width=".6"/><text x="471.5" y="275.0" font-size="4.8" fill="#2a2a2a" text-anchor="start" font-weight="normal" textLength="11.6" lengthAdjust="spacingAndGlyphs" >Box 3</text><text x="473.5" y="270.6" font-size="2.2" fill="#aaa" text-anchor="start" font-weight="normal" >12.50m²</text><text x="474.5" y="279.6" font-size="2.6" fill="#b4b4b4" text-anchor="start" font-weight="normal" >2.40</text>
<rect x="417.3" y="166.6" width="89.3" height="47.7" stroke="#303030" stroke-width="0.88" fill="none" />
<rect x="417.3" y="166.6" width="4.6" height="47.7" stroke="#111" stroke-width="0.35" fill="#111" />
<rect x="502.4" y="166.6" width="4.2" height="47.7" stroke="#111" stroke-width="0.35" fill="#111" />
<rect x="418.4" y="181.0" width="2.2" height="23.0" stroke="none" stroke-width="0.00" fill="#9a9a9a" />
<rect x="503.4" y="181.0" width="2.2" height="23.0" stroke="none" stroke-width="0.00" fill="#9a9a9a" />
<path d="M421.9 172.7L502.4 172.7" stroke="#303030" stroke-width="0.88" />
<path d="M421.9 208.4L502.4 208.4" stroke="#303030" stroke-width="0.88" />
<path d="M417.0 190.4L450.0 190.4" stroke="#444" stroke-width="0.70" />
<path d="M462.0 190.4L515.0 190.4" stroke="#555" stroke-width="0.70" />
<path d="M463.0 166.0L463.0 220.0" stroke="#333" stroke-width="0.88" />
<path d="M469.6 172.7L469.6 190.4" stroke="#333" stroke-width="0.79" />
<path d="M457.5 167.6H472.4L470.6 171.6H455.2Z" fill="#111"/><path d="M465.2 168.7H470L469.2 170.5H464.4Z" fill="#fff"/>
<path d="M454 209.6H466.6L464.8 213.6H451.6Z" fill="#111"/><path d="M455.6 210.6H459.4L458.6 212.5H454.8Z" fill="#fff"/>
<path d="M400.0 216.5L417.3 216.5" stroke="#444" stroke-width="0.79" />
<path d="M392.0 217.6L507.0 217.6" stroke="#2c2c2c" stroke-width="0.88" />
<path d="M417.3 219.3L507.0 219.3" stroke="#555" stroke-width="0.70" />
<path d="M435.8 217.6v2.2h2.4v-2.2" stroke="#222" stroke-width=".9" fill="#fff"/>
<path d="M462.8 217.6v2.2h2.4v-2.2" stroke="#222" stroke-width=".9" fill="#fff"/>
<path d="M485.8 217.6v2.2h2.4v-2.2" stroke="#222" stroke-width=".9" fill="#fff"/>
<path d="M434.8 225.2L486.0 225.2" stroke="#444" stroke-width="0.70" />
<path d="M434.8 225.2L486.0 225.2" stroke="#222" stroke-width="1.32" stroke-dasharray="2 11 3 6 1.5 9"/>
<path d="M437.0 219.6L427.6 229.5L432.4 232.8" stroke="#a8a8a8" stroke-width="0.62" />
<path d="M437.0 219.6L446.0 229.0L441.0 232.6" stroke="#a8a8a8" stroke-width="0.62" />
<path d="M464.0 219.6L456.0 229.0L461.0 232.0" stroke="#a8a8a8" stroke-width="0.62" />
<path d="M464.0 219.6L472.6 229.0L467.6 232.0" stroke="#a8a8a8" stroke-width="0.62" />
<path d="M487.0 219.6L496.0 228.6L491.0 232.0" stroke="#a8a8a8" stroke-width="0.62" />
<path d="M465.6 239.0L475.0 248.6L479.5 239.6" stroke="#a8a8a8" stroke-width="0.62" />
<path d="M404.6 221.0L396.0 229.6" stroke="#a8a8a8" stroke-width="0.62" />
<path d="M414.2 239.0L420.6 247.6L422.7 239.0" stroke="#a8a8a8" stroke-width="0.62" />
<path d="M410.3 239.0L402.0 248.6L400.0 241.0" stroke="#a8a8a8" stroke-width="0.62" />
<path d="M494.0 285.5L506.6 290.4" stroke="#a8a8a8" stroke-width="0.62" />
<path d="M494.0 285.5L500.0 280.0L506.6 283.0" stroke="#a8a8a8" stroke-width="0.62" />
<text x="440.0" y="228.6" font-size="2.6" fill="#9a9a9a" text-anchor="start" font-weight="normal" >EI 30  0.90</text>
<text x="466.0" y="228.6" font-size="2.6" fill="#9a9a9a" text-anchor="start" font-weight="normal" >EI 30  0.90</text>
<text x="414.0" y="227.0" font-size="3" fill="#333" text-anchor="start" font-weight="normal" >&#9664;&#9632;&#9472;&#9472;</text>
<text x="413.5" y="231.0" font-size="2.6" fill="#999" text-anchor="start" font-weight="normal" >1.20</text>
<path d="M427.7 238.9L435.6 238.9L435.6 232.9L438.7 232.9L438.7 238.9L463.2 238.9L463.2 232.4L466.2 232.4L466.2 243.2L427.7 243.2Z" stroke="#1e1e1e" stroke-width="0.79" />
<rect x="436.0" y="243.2" width="25.9" height="45.0" stroke="#1e1e1e" stroke-width="0.88" fill="none" />
<rect x="436.0" y="243.2" width="4.3" height="45.0" stroke="#222" stroke-width="0.44" fill="#585858" />
<rect x="440.6" y="246.3" width="20.1" height="17.4" stroke="#111" stroke-width="1.41" fill="none" />
<rect x="440.6" y="270.0" width="18.8" height="15.9" stroke="#111" stroke-width="1.41" fill="none" />
<rect x="440.3" y="265.3" width="21.6" height="4.0" stroke="#444" stroke-width="0.44" fill="#6a6a6a" />
<text x="450.6" y="256.6" font-size="2.6" fill="#aaa" text-anchor="middle" font-weight="normal" >2.1</text>
<text x="450.0" y="279.6" font-size="2.6" fill="#aaa" text-anchor="middle" font-weight="normal" >2.1</text>
<path d="M462.6 243.2L462.6 293.0" stroke="#1e1e1e" stroke-width="0.79" />
<path d="M466.3 243.2L466.3 293.0" stroke="#1e1e1e" stroke-width="0.79" />
<path d="M433.2 289.8L433.2 294.6L465.8 294.6L465.8 289.8" stroke="#1e1e1e" stroke-width="0.79" />
<path d="M400.0 285.9L433.2 285.9" stroke="#1e1e1e" stroke-width="0.79" />
<path d="M400.0 289.8L436.0 289.8" stroke="#1e1e1e" stroke-width="0.79" />
<rect x="410.3" y="239.2" width="3.9" height="46.7" stroke="#1e1e1e" stroke-width="0.79" fill="none" />
<rect x="486.3" y="232.4" width="2.2" height="55.8" stroke="#1e1e1e" stroke-width="0.79" fill="none" />
<path d="M488.5 252.2L506.6 252.2" stroke="#1e1e1e" stroke-width="0.88" />
<path d="M488.5 254.8L506.6 254.8" stroke="#1e1e1e" stroke-width="0.79" />
<path d="M479.2 239.5L486.3 239.5" stroke="#222" stroke-width="1.41" />
<rect x="467.2" y="287.5" width="24.5" height="2.3" stroke="#555" stroke-width="0.35" fill="#777" />
<path d="M479.3 292.5L479.3 301.9" stroke="#222" stroke-width="0.88" />
<path d="M479.0 301.9L485.4 301.9" stroke="#222" stroke-width="1.32" />
<path d="M470.0 281.0L476.6 281.0L476.6 287.5" stroke="#222" stroke-width="0.88" />
<path d="M419.0 277.8L432.0 277.8" stroke="#333" stroke-width="0.70" />
<path d="M417 277.8L421.2 275.6V280Z" fill="#111"/>
<path d="M420.4 275.0L420.4 280.6" stroke="#111" stroke-width="0.88" />
<text x="424.0" y="277.0" font-size="2.6" fill="#888" text-anchor="start" font-weight="normal" >0.90</text>
<path d="M400.0 299.3L440.0 299.3" stroke="#888" stroke-width="0.62" />
<path d="M399.0 257.2L406.0 257.2" stroke="#222" stroke-width="0.97" />
<path d="M433.0 256.0L437.0 256.0" stroke="#333" stroke-width="1.06" />
<path d="M397.3 289.7L363.4 289.7L363.4 238.3L392.4 238.3L392.4 233.2L394.6 233.2L394.6 238.3L397.3 238.3L397.3 243.3" stroke="#161616" stroke-width="1.14" />
<path d="M397.3 243.3L367.2 243.3L367.2 286.6L397.3 286.6" stroke="#161616" stroke-width="0.97" />
<path d="M381.3 243.3L381.3 258.8" stroke="#161616" stroke-width="0.79" />
<path d="M381.3 271.5L381.3 286.6" stroke="#161616" stroke-width="0.79" />
<path d="M385.3 243.3L385.3 258.8" stroke="#161616" stroke-width="0.79" />
<path d="M385.3 271.5L385.3 286.6" stroke="#161616" stroke-width="0.79" />
<path d="M389.0 243.3L389.0 258.8" stroke="#161616" stroke-width="0.79" />
<path d="M389.0 271.5L389.0 286.6" stroke="#161616" stroke-width="0.79" />
<path d="M392.6 243.3L392.6 258.8" stroke="#161616" stroke-width="0.79" />
<path d="M392.6 271.5L392.6 286.6" stroke="#161616" stroke-width="0.79" />
<path d="M396.2 243.3L396.2 258.8" stroke="#161616" stroke-width="0.79" />
<path d="M396.2 271.5L396.2 286.6" stroke="#161616" stroke-width="0.79" />
<rect x="382.0" y="258.8" width="14.2" height="12.7" stroke="#111" stroke-width="1.32" fill="none" />
<path d="M397.3 250.4L374.4 250.4L374.4 257.4" stroke="#161616" stroke-width="0.97" />
<path d="M367.2 257.4L382.0 257.4" stroke="#161616" stroke-width="0.97" />
<path d="M367.2 272.6L382.0 272.6" stroke="#161616" stroke-width="0.97" />
<path d="M368.0 259.6L381.0 264.6" stroke="#555" stroke-width="0.62" />
<path d="M368.0 263.6L381.0 266.0" stroke="#555" stroke-width="0.62" />
<path d="M368.0 271.0L381.0 267.0" stroke="#777" stroke-width="0.62" />
<path d="M392.4 220.5v-3.8h12" stroke="#222" stroke-width="1"/>
<path d="M394.5 220.5L403.0 228.5" stroke="#444" stroke-width="0.79" />
<path d="M397.3 243.3L404.6 243.3" stroke="#444" stroke-width="0.70" />
<path d="M368.5 289.7L368.5 371.5" stroke="#303030" stroke-width="0.97" />
<path d="M368.5 332.3L506.6 332.3" stroke="#444" stroke-width="0.88" />
<rect x="405.8" y="329.0" width="8.7" height="4.3" stroke="#222" stroke-width="0.79" fill="#fff" />
<rect x="383.4" y="367.4" width="10.1" height="4.1" stroke="#222" stroke-width="0.79" fill="#fff" />
<rect x="502.4" y="351.5" width="4.2" height="20.0" stroke="#222" stroke-width="0.79" fill="#fff" />
<path d="M408.3 371.5L423.0 371.5" stroke="#222" stroke-width="1.32" />
<path d="M468.0 343.6L478.5 343.6" stroke="#555" stroke-width="1.41" />
<text x="300.0" y="120.6" font-size="2.8" fill="#a6a6a6" text-anchor="start" font-weight="normal" >.</text>
<text x="313.5" y="120.6" font-size="2.8" fill="#a6a6a6" text-anchor="start" font-weight="normal" >2.50</text>
<text x="350.5" y="120.6" font-size="2.8" fill="#a6a6a6" text-anchor="start" font-weight="normal" >2.50</text>
<text x="333.0" y="341.6" font-size="2.8" fill="#a6a6a6" text-anchor="start" font-weight="normal" >2.50</text>
<text x="333.0" y="266.6" font-size="2.8" fill="#a6a6a6" text-anchor="start" font-weight="normal" >2.30</text>
<text x="358.0" y="180.0" font-size="2.8" fill="#a6a6a6" text-anchor="start" font-weight="normal" >5.50</text>
<text x="436.0" y="341.6" font-size="2.8" fill="#a6a6a6" text-anchor="start" font-weight="normal" >5.00</text>
<text x="0.0" y="0.0" font-size="2.8" fill="#a6a6a6" text-anchor="middle" font-weight="normal" transform="translate(325 205) rotate(-90)">10.00</text>
<text x="0.0" y="0.0" font-size="2.8" fill="#a6a6a6" text-anchor="middle" font-weight="normal" transform="translate(325 270) rotate(-90)">6.10</text>
<text x="0.0" y="0.0" font-size="2.8" fill="#a6a6a6" text-anchor="middle" font-weight="normal" transform="translate(325 318) rotate(-90)">8.60</text>
<text x="0.0" y="0.0" font-size="2.8" fill="#a6a6a6" text-anchor="middle" font-weight="normal" transform="translate(402.6 198) rotate(-90)">5.00</text>
<path d="M277.8 282.7L314.9 282.7" stroke="#333" stroke-width="0.88" stroke-dasharray="8.2 3 1 3 7.5 4 11 0"/>
<path d="M279 282.2L281.7 279.6L284.4 282.2" stroke="#666" stroke-width=".7"/>
<text x="281.7" y="289.4" font-size="4.6" fill="#333" text-anchor="middle" font-weight="normal" >A</text>
<path d="M525.6 302.5L562.3 302.5" stroke="#333" stroke-width="0.88" stroke-dasharray="8 6.4 8.6 3 1 3 7 0"/>
<path d="M556.4 302L559.1 299.4L561.8 302" stroke="#666" stroke-width=".7"/>
<text x="559.1" y="311.6" font-size="4.6" fill="#444" text-anchor="middle" font-weight="normal" >A</text>
<path d="M454.0 77.6L454.0 114.0" stroke="#444" stroke-width="0.88" stroke-dasharray="8 2.6 1 2.6 9 3 10 0"/>
<path d="M454 78L451 81.5L454 85Z" stroke="#555" stroke-width=".8"/>
<text x="0.0" y="0.0" font-size="5.4" fill="#333" text-anchor="middle" font-weight="normal" transform="translate(463.6 81.2) rotate(-90)">B</text>
<path d="M454.0 366.0L454.0 402.0" stroke="#444" stroke-width="0.88" stroke-dasharray="7.5 2.4 1 2.4 9.5 2.4 1 2.4 8 0"/>
<path d="M454 396.4L451.2 399.2L454 402Z" stroke="#555" stroke-width=".8"/>
<text x="0.0" y="0.0" font-size="5.4" fill="#333" text-anchor="middle" font-weight="normal" transform="translate(461.2 398.9) rotate(-90)">B</text>
<text x="225.7" y="460.6" font-size="3.6" fill="#aaa" text-anchor="start" font-weight="normal" textLength="10.5" lengthAdjust="spacingAndGlyphs" >NOTA:</text>
<text x="221.0" y="469.3" font-size="6" fill="#3a3a3a" text-anchor="start" font-weight="normal" textLength="208.0" lengthAdjust="spacingAndGlyphs" >- ESTE DESENHO DESTINA-SE A SER CONSTITUIDO ELEMENTO DE PEDIDO DE PROPRIEDADE HORIZONTAL</text>
<circle cx="447.5" cy="467" r="8.1" stroke="#444" stroke-width=".9"/>
<path d="M447.2 467.8L452.2 456.0" stroke="#222" stroke-width="1.32" />
<text x="452.4" y="455.6" font-size="3.2" fill="#666" text-anchor="middle" font-weight="normal" font-style="italic">N</text>
<rect x="468.3" y="400.8" width="86.2" height="50.9" stroke="#333" stroke-width="0.88" fill="#fff" />
<rect x="468.3" y="454.0" width="86.2" height="27.6" stroke="#333" stroke-width="0.88" fill="#fff" />
<circle cx="520.6" cy="403.4" r="2.1" fill="#8e8e8e"/>
<path d="M518.4 407.6Q521.8 405.4 525 407.2V424.6H518.4Z" fill="#8e8e8e"/>
<path d="M525.4 407Q526 403.6 529.4 403.6Q532 403.6 532 406V424.6H525.4Z" fill="#969696"/>
<path d="M532.4 406Q533 403.6 536.2 403.6Q538.9 403.6 538.9 406.4V420.6Q537 424.2 532.4 424.6Z" fill="#8e8e8e"/>
<text x="481.0" y="436.4" font-size="12.4" fill="#151515" text-anchor="start" font-weight="bold" textLength="62.0" lengthAdjust="spacingAndGlyphs" >Ideia Matriz</text>
<text x="481.8" y="442.3" font-size="5.5" fill="#111" text-anchor="start" font-weight="bold" textLength="60.7" lengthAdjust="spacingAndGlyphs" stroke="#111" stroke-width=".12">Arquitectura e Urbanismo</text>
<text x="471.4" y="446.4" font-size="2.9" fill="#2e2e2e" text-anchor="start" font-weight="bold" textLength="81.0" lengthAdjust="spacingAndGlyphs" >Rua da Torre, 240 - TORRE PLAZA - Loja 25 - 2750-762 Cascais</text>
<text x="471.4" y="449.6" font-size="2.9" fill="#2e2e2e" text-anchor="start" font-weight="bold" textLength="81.0" lengthAdjust="spacingAndGlyphs" >Telf. 214820510 Telm. 917526157 - ideiamatriz.arq@gmail.com</text>
<text x="471.4" y="458.2" font-size="2.8" fill="#888" text-anchor="start" font-weight="normal" textLength="14.0" lengthAdjust="spacingAndGlyphs" >PROJECTOU</text>
<text x="471.4" y="463.8" font-size="5.4" fill="#555" text-anchor="start" font-weight="normal" textLength="37.0" lengthAdjust="spacingAndGlyphs" >LUIS TEIXEIRA</text>
<text x="471.4" y="479.4" font-size="4.6" fill="#aaa" text-anchor="start" font-weight="normal" textLength="43.0" lengthAdjust="spacingAndGlyphs" >Nº insc. Ordem Arqts</text>
<text x="527.5" y="479.4" font-size="4.6" fill="#bbb" text-anchor="start" font-weight="normal" textLength="24.6" lengthAdjust="spacingAndGlyphs" >1975 — S</text>
<rect x="557.4" y="400.9" width="171.6" height="8.2" stroke="#333" stroke-width="0.88" fill="#fff" />
<path d="M586.3 400.9L586.3 409.1" stroke="#333" stroke-width="0.79" />
<path d="M699.9 400.9L699.9 409.1" stroke="#333" stroke-width="0.79" />
<text x="560.6" y="405.8" font-size="2.8" fill="#444" text-anchor="start" font-weight="bold" textLength="11.0" lengthAdjust="spacingAndGlyphs" >ALTERAÇÃO</text>
<text x="589.0" y="405.8" font-size="2.8" fill="#888" text-anchor="start" font-weight="normal" textLength="8.0" lengthAdjust="spacingAndGlyphs" >DATA</text>
<text x="703.6" y="405.8" font-size="2.8" fill="#888" text-anchor="start" font-weight="normal" textLength="5.0" lengthAdjust="spacingAndGlyphs" >DES.</text>
<rect x="557.4" y="412.3" width="171.6" height="11.2" stroke="#333" stroke-width="0.88" fill="#fff" />
<text x="560.6" y="417.2" font-size="3.6" fill="#111" text-anchor="start" font-weight="bold" textLength="16.0" lengthAdjust="spacingAndGlyphs" >CLIENTE</text>
<text x="642.6" y="418.6" font-size="6" fill="#666" text-anchor="middle" font-weight="normal" textLength="56.4" lengthAdjust="spacingAndGlyphs" >J. DIAS &amp; DIAS, S.A.</text>
<text x="643.2" y="422.8" font-size="4" fill="#333" text-anchor="middle" font-weight="normal" textLength="94.4" lengthAdjust="spacingAndGlyphs" >AV. DR. FRANCISCO SÁ CARNEIRO, Nº5, 5ºD, OEIRAS</text>
<path d="M596.0 423.0L690.4 423.0" stroke="#444" stroke-width="0.53" />
<rect x="557.4" y="426.7" width="171.6" height="14.1" stroke="#333" stroke-width="0.88" fill="#fff" />
<text x="560.6" y="431.0" font-size="2.8" fill="#888" text-anchor="start" font-weight="normal" textLength="12.0" lengthAdjust="spacingAndGlyphs" >PROJECTO</text>
<text x="643.6" y="433.6" font-size="6.4" fill="#555" text-anchor="middle" font-weight="normal" textLength="89.3" lengthAdjust="spacingAndGlyphs" >AVENIDA ELIAS GARCIA — LOTE 9</text>
<text x="643.2" y="438.6" font-size="4" fill="#555" text-anchor="middle" font-weight="normal" textLength="19.6" lengthAdjust="spacingAndGlyphs" >AMADORA</text>
<rect x="557.4" y="444.2" width="171.6" height="7.2" stroke="#333" stroke-width="0.88" fill="#fff" />
<text x="560.6" y="448.8" font-size="2.8" fill="#444" text-anchor="start" font-weight="bold" textLength="6.0" lengthAdjust="spacingAndGlyphs" >FASE</text>
<text x="643.3" y="449.8" font-size="5" fill="#555" text-anchor="middle" font-weight="normal" textLength="30.7" lengthAdjust="spacingAndGlyphs" >ARQUITECTURA</text>
<rect x="557.4" y="454.5" width="140.0" height="16.9" stroke="#333" stroke-width="0.88" fill="#fff" />
<text x="560.6" y="458.8" font-size="2.8" fill="#444" text-anchor="start" font-weight="bold" textLength="6.0" lengthAdjust="spacingAndGlyphs" >DES.</text>
<text x="627.0" y="465.4" font-size="6.4" fill="#555" text-anchor="middle" font-weight="normal" textLength="56.0" lengthAdjust="spacingAndGlyphs" >PLANTA DO PISO —3</text>
<rect x="557.4" y="474.6" width="140.0" height="7.0" stroke="#333" stroke-width="0.88" fill="#fff" />
<path d="M593.3 474.6L593.3 481.6" stroke="#333" stroke-width="0.79" />
<path d="M629.6 474.6L629.6 481.6" stroke="#333" stroke-width="0.79" />
<path d="M665.7 474.6L665.7 481.6" stroke="#333" stroke-width="0.79" />
<text x="559.6" y="479.6" font-size="3.2" fill="#555" text-anchor="start" font-weight="normal" textLength="14.0" lengthAdjust="spacingAndGlyphs" >Desenho nº</text>
<text x="596.0" y="479.6" font-size="2.8" fill="#777" text-anchor="start" font-weight="normal" textLength="6.0" lengthAdjust="spacingAndGlyphs" >DATA</text>
<text x="614.6" y="480.0" font-size="3.8" fill="#444" text-anchor="start" font-weight="normal" textLength="13.6" lengthAdjust="spacingAndGlyphs" >FEV/20</text>
<text x="632.0" y="479.6" font-size="2.8" fill="#333" text-anchor="start" font-weight="bold" textLength="9.0" lengthAdjust="spacingAndGlyphs" >ESCALA</text>
<text x="654.0" y="480.0" font-size="3.8" fill="#aaa" text-anchor="start" font-weight="normal" textLength="10.0" lengthAdjust="spacingAndGlyphs" >1/100</text>
<text x="668.0" y="479.6" font-size="2.8" fill="#888" text-anchor="start" font-weight="normal" textLength="14.0" lengthAdjust="spacingAndGlyphs" >SUBSTITUI</text>
<rect x="699.5" y="454.5" width="29.5" height="27.1" stroke="#333" stroke-width="0.88" fill="#fff" />
<text x="714.2" y="473.4" font-size="15" fill="#9a9a9a" text-anchor="middle" font-weight="normal" textLength="6.6" lengthAdjust="spacingAndGlyphs" >2</text>
</g></svg>
<div id="taskbar" class="abs"></div><div id="tsearch" class="abs"></div><div id="tactive" class="abs"></div>
<div class="abs ul" style="left:198.3px;width:18.399999999999977px"></div>
<div class="abs ul" style="left:247px;width:18px"></div>
<div class="abs ul" style="left:296px;width:18px"></div>
<div class="abs ul" style="left:320px;width:18px"></div>
<div class="abs ul" style="left:393px;width:18px"></div>
<div class="abs ul" style="left:466px;width:18px"></div>
<div class="abs ul" style="left:515px;width:18px"></div>
<div class="abs ul" style="left:540px;width:18px"></div>
<div class="abs ul" style="left:561px;width:24px;background:#9cc0ea"></div>
<svg class="abs" style="left:0;top:486px" width="900" height="20" viewBox="0 486 900 20" fill="none" stroke-linecap="round" stroke-linejoin="round">
<g fill="#fff"><path d="M6.4 492.3L10.8 491.7V495.7H6.4ZM11.6 491.6L17 490.8V495.7H11.6ZM6.4 496.5H10.8V500.5L6.4 499.9ZM11.6 496.5H17V501.4L11.6 500.6Z"/></g>
<circle cx="38.6" cy="494.4" r="3.3" stroke="#e4e4e4" stroke-width="1.2"/><path d="M36.2 497L32.6 500.8" stroke="#e4e4e4" stroke-width="1.3"/>
<!-- folder -->
<path d="M202 492.2H206.4L207.4 493.4H213V500H202Z" fill="#f3c54a"/><path d="M202 494.6H213V500.2H202Z" fill="#f7d978"/><rect x="204.6" y="496.6" width="5.8" height="3.6" fill="#5c9be0"/><rect x="205.8" y="497.6" width="3.4" height="1.6" fill="#dfeaf6"/>
<!-- chromes -->
<g><circle cx="231.7" cy="496" r="5.4" fill="#e94335"/><path d="M231.7 496L227 498.7A5.4 5.4 0 0 0 234.4 500.7Z" fill="#34a853"/><path d="M231.7 496L234.4 500.7A5.4 5.4 0 0 0 236.4 493.3Z" fill="#fbbc05"/><path d="M231.7 496L227 498.7A5.4 5.4 0 0 1 227 493.3Z" fill="#34a853"/><circle cx="231.7" cy="496" r="2.6" fill="#fff"/><circle cx="231.7" cy="496" r="2" fill="#4a8af4"/></g>
<g transform="translate(24.5 0)"><circle cx="231.7" cy="496" r="5.4" fill="#e94335"/><path d="M231.7 496L227 498.7A5.4 5.4 0 0 0 234.4 500.7Z" fill="#34a853"/><path d="M231.7 496L234.4 500.7A5.4 5.4 0 0 0 236.4 493.3Z" fill="#fbbc05"/><path d="M231.7 496L227 498.7A5.4 5.4 0 0 1 227 493.3Z" fill="#34a853"/><circle cx="231.7" cy="496" r="2.6" fill="#fff"/><circle cx="231.7" cy="496" r="2" fill="#4a8af4"/></g><g transform="translate(48.9 0)"><circle cx="231.7" cy="496" r="5.4" fill="#e94335"/><path d="M231.7 496L227 498.7A5.4 5.4 0 0 0 234.4 500.7Z" fill="#34a853"/><path d="M231.7 496L234.4 500.7A5.4 5.4 0 0 0 236.4 493.3Z" fill="#fbbc05"/><path d="M231.7 496L227 498.7A5.4 5.4 0 0 1 227 493.3Z" fill="#34a853"/><circle cx="231.7" cy="496" r="2.6" fill="#fff"/><circle cx="231.7" cy="496" r="2" fill="#4a8af4"/></g>
<circle cx="235" cy="499.6" r="1.8" fill="#3a2a1a"/><circle cx="259.6" cy="499.6" r="1.9" fill="#d8d8d8"/><circle cx="283.8" cy="499.4" r="1.8" fill="#24304a"/>
<!-- outlook -->
<rect x="302.4" y="491" width="7.4" height="9.6" rx="1" fill="#28a8ea"/><rect x="302.4" y="495.8" width="7.4" height="4.8" fill="#0a64b4"/><rect x="299.8" y="493" width="6.4" height="6.4" rx="1" fill="#0f78d4"/><circle cx="303" cy="496.2" r="1.6" stroke="#fff" stroke-width="1"/>
<!-- word -->
<rect x="326.4" y="491" width="8.2" height="10" rx="1" fill="#41a5ee"/><rect x="326.4" y="496" width="8.2" height="5" fill="#185abd"/><rect x="323.8" y="493" width="6.4" height="6.4" rx="1" fill="#2b5eb8"/><path d="M325 494.6L326 497.8L327 495.2L328 497.8L329 494.6" stroke="#fff" stroke-width=".8"/>
<!-- scanner -->
<rect x="348" y="491.4" width="10.2" height="9" rx="1" fill="#3b4cc8"/><path d="M350 493.4H356.2M351.6 494.4L349.8 498.6H356.4L354.6 494.4Z" stroke="#fff" stroke-width="1"/>
<!-- CS -->
<path d="M374.2 499.6H382.6" stroke="#2fb386" stroke-width="1.3" stroke-linecap="butt"/>
<!-- calc -->
<rect x="398.8" y="490.6" width="7.2" height="10.4" rx=".8" fill="#7d8d96"/><rect x="399.8" y="491.6" width="5.2" height="2.4" fill="#3a7a78"/><g fill="#e8ecee"><rect x="399.8" y="495" width="1.3" height="1.3"/><rect x="401.8" y="495" width="1.3" height="1.3"/><rect x="403.8" y="495" width="1.3" height="1.3"/><rect x="399.8" y="497" width="1.3" height="1.3"/><rect x="401.8" y="497" width="1.3" height="1.3"/><rect x="403.8" y="497" width="1.3" height="3.3"/><rect x="399.8" y="499" width="1.3" height="1.3"/><rect x="401.8" y="499" width="1.3" height="1.3"/></g>
<!-- clip -->
<path d="M422 494.4L432 491.4L432.8 493.4L422.6 496Z" fill="#c86af0"/><rect x="422" y="495.2" width="11" height="5.6" rx=".8" fill="#a04ae0"/><rect x="422" y="497.6" width="11" height="3.2" rx=".8" fill="#8a3edc"/>
<!-- diamond -->
<path d="M451.2 490.6L456.8 496L451.2 501.4L445.6 496Z" fill="#6e4ee6"/><path d="M445.6 496L451.2 490.6V501.4Z" fill="#5a3ed0"/><path d="M450 494L453.4 496L450 498Z" fill="#fff"/>
<!-- whatsapp -->
<path d="M470.6 501L471.4 498.4A5.1 5.1 0 1 1 473.2 500.2Z" stroke="#2fd466" stroke-width="1.3"/><path d="M473.6 494C473.6 496.2 475.4 498 477.6 498L478.2 497L476.8 496.2L476.2 496.8C475.4 496.4 475 496 474.8 495.4L475.4 494.8L474.6 493.4Z" fill="#2fd466"/>
<!-- teams -->
<circle cx="503" cy="493" r="1.7" fill="#7b83eb"/><circle cx="499.6" cy="492.4" r="2" fill="#6c74dc"/><rect x="501.4" y="494.8" width="4" height="5" rx="1.2" fill="#5b62c8"/><rect x="496.6" y="494.8" width="6" height="6.2" rx="1.2" fill="#7b83eb"/><rect x="494.8" y="493.6" width="5.4" height="5.4" rx=".8" fill="#4b53bc"/><path d="M496 495H499M497.5 495V498" stroke="#fff" stroke-width=".8"/>
<!-- spotify -->
<circle cx="524.2" cy="496" r="5.4" fill="#1ed760"/><path d="M521.2 494.2C523.4 493.6 525.8 493.8 527.6 494.8M521.6 496.2C523.4 495.8 525.2 496 526.8 496.8M522 498C523.4 497.8 524.8 497.9 526 498.6" stroke="#0c2a16" stroke-width=".9"/>
<!-- photos -->
<rect x="544" y="491" width="10" height="10" rx="1.2" fill="#2b8ae6"/><path d="M544 499L547.6 494.6L551 498.4L552.4 497L554 498.6V499.8Q554 501 552.8 501H545.2Q544 501 544 499.8Z" fill="#9ad6f6"/><circle cx="551.4" cy="493.4" r="1" fill="#d6f0ff"/>
<!-- acrobat -->
<rect x="567.8" y="490.2" width="10.6" height="10.8" rx="1.6" fill="#c4202a"/><path d="M570 498.8C571.6 497.6 573 494.6 573 492.8C573 491.8 572 491.8 572 492.8C572 494.8 574.4 497.2 576.2 497.2C577.2 497.2 577 496.2 576 496.2C574 496.2 571.4 497.4 570 498.8Z" stroke="#fff" stroke-width=".8"/>
<!-- tray -->
<path d="M811.6 498L815 494.6L818.4 498" stroke="#f0f0f0" stroke-width="1.3"/>
<path d="M829.4 493.6H836.4V499.2H829.4ZM836.6 495.2H837.6V497.6H836.6M827.2 492.4C826 492.4 826 494.4 827.6 494.4H829.4" stroke="#e8e8e8" stroke-width="1"/>
<path d="M846.6 490.8L851 492.2V496.4C851 498.8 848.8 500.6 846.6 501.4C844.4 500.6 842.2 498.8 842.2 496.4V492.2Z" fill="#f2f2f2"/><path d="M846.6 491V501.2M842.4 495.8H850.8" stroke="#1a2230" stroke-width=".8"/><circle cx="849.6" cy="499.6" r="2.1" fill="#2eb85c"/>
<path d="M860 500.4A8.4 8.4 0 0 1 868.4 492" stroke="#8a96a6" stroke-width="1"/><path d="M862.6 500.4A5.8 5.8 0 0 1 868.4 494.6M865.2 500.4A3.2 3.2 0 0 1 868.4 497.2" stroke="#f0f0f0" stroke-width="1"/><circle cx="867.6" cy="499.8" r=".9" fill="#f0f0f0"/>
<path d="M896.5 486V506" stroke="#4a5668" stroke-width="1"/>
</svg>
<span id="t_pesq" class="t" style="left:50px;top:491.07px;font-size:10.5px;color:#e4e4e4;font-weight:normal;transform:scaleX(0.8495);">Pesquisa</span>
<span id="t_cs" class="t" style="left:374.2px;top:491.82px;font-size:7.5px;color:#ffffff;font-weight:bold;transform:scaleX(0.8060);">CS</span>
<span id="t_time" class="t" style="left:875px;top:490.73px;font-size:9.5px;color:#f4f4f4;font-weight:normal;transform:scaleX(0.7653);">15:14</span>
</div></body></html>
